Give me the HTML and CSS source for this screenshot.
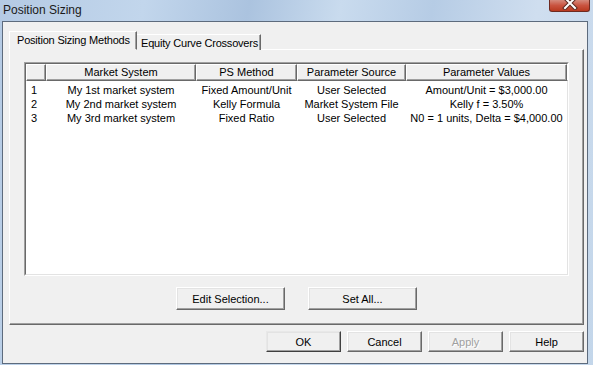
FILE: index.html
```html
<!DOCTYPE html>
<html lang="en">
<head>
  <meta charset="UTF-8" />
  <title>Position Sizing</title>
  <link rel="stylesheet" href="styles.css">
</head>
<body>
  <div class="window">
    <div class="titlebar">
      <span class="title">Position Sizing</span>
      <div class="close-btn">
        <svg width="16" height="10" viewBox="0 0 16 10">
          <path d="M3 -2 L13 8 M13 -2 L3 8" stroke="#5a2a22" stroke-width="4" stroke-linecap="square"/>
          <path d="M3 -2 L13 8 M13 -2 L3 8" stroke="#ffffff" stroke-width="2" stroke-linecap="square"/>
        </svg>
      </div>
    </div>

    <div class="client">
      <div class="tabs">
        <div class="tab active">Position Sizing Methods</div>
        <div class="tab">Equity Curve Crossovers</div>
      </div>

      <div class="panel">
        <div class="list">
          <div class="list-inner">
            <div class="grid header">
              <div class="hcell"></div>
              <div class="hcell">Market System</div>
              <div class="hcell">PS Method</div>
              <div class="hcell">Parameter Source</div>
              <div class="hcell">Parameter Values</div>
              <div class="hcell filler"></div>
            </div>
            <div class="rows">
              <div class="grid row">
                <div class="num">1</div>
                <div>My 1st market system</div>
                <div>Fixed Amount/Unit</div>
                <div>User Selected</div>
                <div>Amount/Unit = $3,000.00</div>
                <div></div>
              </div>
              <div class="grid row">
                <div class="num">2</div>
                <div>My 2nd market system</div>
                <div>Kelly Formula</div>
                <div>Market System File</div>
                <div>Kelly f = 3.50%</div>
                <div></div>
              </div>
              <div class="grid row">
                <div class="num">3</div>
                <div>My 3rd market system</div>
                <div>Fixed Ratio</div>
                <div>User Selected</div>
                <div>N0 = 1 units, Delta = $4,000.00</div>
                <div></div>
              </div>
            </div>
          </div>
        </div>

        <div class="panel-buttons">
          <button class="btn wide">Edit Selection...</button>
          <button class="btn wide">Set All...</button>
        </div>
      </div>

      <div class="dialog-buttons">
        <button class="btn default">OK</button>
        <button class="btn">Cancel</button>
        <button class="btn" disabled>Apply</button>
        <button class="btn">Help</button>
      </div>
    </div>
  </div>
</body>
</html>
```

FILE: styles.css
```css
body {
  margin: 0;
  width: 593px;
  height: 365px;
  overflow: hidden;
  font-family: "Liberation Sans", Arial, sans-serif;
  font-size: 11px;
  color: #000;
}

.window {
  height: 365px;
  box-sizing: border-box;
  padding: 0 5px 1px 2px;
  display: flex;
  flex-direction: column;
  background: linear-gradient(100deg, #b4cae4 0%, #c2d6ec 22%, #abc3df 38%, #c9dbee 52%, #b6cce5 66%, #cfdeef 82%, #c3d6ea 100%);
}

.titlebar {
  height: 21px;
  display: flex;
  align-items: flex-start;
  flex-shrink: 0;
}

.title {
  font-size: 12px;
  color: #1a1a1a;
  margin: 3px 0 0 1px;
}

.close-btn {
  margin-left: auto;
  margin-right: -2px;
  width: 39px;
  height: 11px;
  border: 1px solid #6e2a20;
  border-top: none;
  border-radius: 0 0 3px 3px;
  background: linear-gradient(#d58a7c, #c9533f 50%, #b8391f);
  display: flex;
  justify-content: center;
  align-items: flex-start;
}

.client {
  flex: 1;
  background: #f0f0f0;
  border: 1px solid #5d6b7d;
  padding: 9px 3px 0 6px;
  display: flex;
  flex-direction: column;
}

.tabs {
  display: flex;
  align-items: flex-end;
  height: 19px;
  margin-bottom: -1px;
  position: relative;
  z-index: 1;
}

.tab {
  height: 16px;
  line-height: 17px;
  padding: 0 5px;
  background: #f0f0f0;
  border: 1px solid;
  border-color: #fff #696969 #fff #fff;
  border-bottom: none;
  box-shadow: inset -1px 0 #a0a0a0;
  white-space: nowrap;
  letter-spacing: -0.2px;
}

.tab.active {
  height: 19px;
  line-height: 17px;
  width: 128px;
  box-sizing: border-box;
  padding: 0 0 0 7px;
  border-right: 1px solid #696969;
  border-bottom: 1px solid #f0f0f0;
}

.tab.active + .tab {
  border-left: none;
  width: 124px;
  box-sizing: border-box;
  padding-left: 4px;
}

.panel {
  height: 276px;
  box-sizing: border-box;
  border: 1px solid;
  border-color: #fff #696969 #696969 #fff;
  box-shadow: inset -1px -1px #a0a0a0;
  padding: 12px 14px 0 14px;
  display: flex;
  flex-direction: column;
}

.list {
  height: 214px;
  box-sizing: border-box;
  border: 1px solid;
  border-color: #a0a0a0 #fff #fff #a0a0a0;
}

.list-inner {
  height: 100%;
  box-sizing: border-box;
  border: 1px solid;
  border-color: #696969 #e3e3e3 #e3e3e3 #696969;
  background: #fff;
}

.grid {
  display: grid;
  grid-template-columns: 20px 150px 101px 109px 161px 1fr;
}

.hcell {
  height: 17px;
  line-height: 15px;
  box-sizing: border-box;
  background: #f0f0f0;
  border: 1px solid;
  border-color: #fff #696969 #696969 #fff;
  box-shadow: inset -1px -1px #a0a0a0;
  text-align: center;
  white-space: nowrap;
}

.hcell.filler {
  border-right: none;
  box-shadow: inset 0 -1px #a0a0a0;
}

.rows {
  padding-top: 2px;
}

.row {
  height: 14px;
  line-height: 14px;
  text-align: center;
  white-space: nowrap;
}

.row .num {
  text-align: left;
  padding-left: 5px;
}

.panel-buttons {
  display: flex;
  justify-content: center;
  gap: 23px;
  margin-top: 11px;
}

.btn {
  font-family: "Liberation Sans", Arial, sans-serif;
  font-size: 11px;
  color: #000;
  width: 75px;
  height: 21px;
  padding: 0;
  background: #f0f0f0;
  border: 1px solid;
  border-color: #fff #696969 #696969 #fff;
  box-shadow: inset -1px -1px #a0a0a0, inset 1px 1px #e3e3e3;
  border-radius: 0;
}

.btn.wide {
  width: 109px;
  height: 23px;
}

.btn.default {
  border-color: #e8e8e8 #404040 #404040 #e8e8e8;
}

.btn:disabled {
  color: #a0a0a0;
  text-shadow: 1px 1px #fff;
}

.dialog-buttons {
  display: flex;
  justify-content: flex-end;
  gap: 6px;
  margin-top: 6px;
}
```
